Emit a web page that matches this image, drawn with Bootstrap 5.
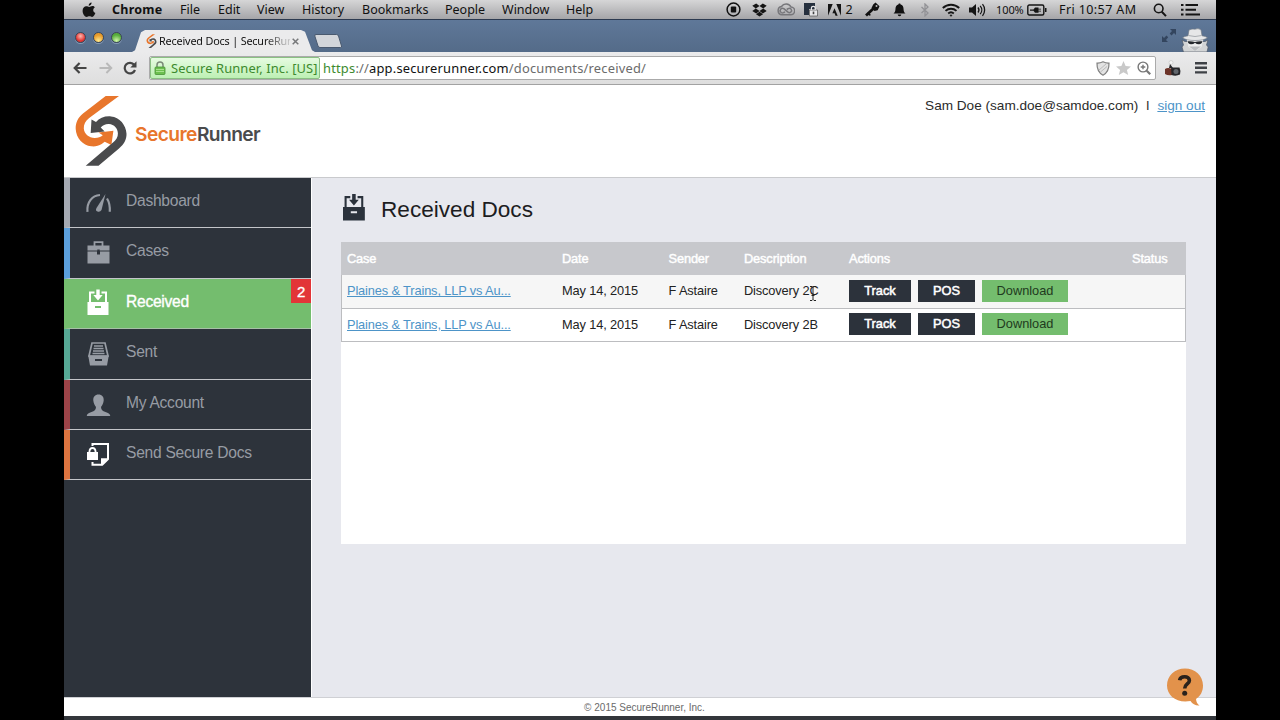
<!doctype html>
<html lang="en">
  <head>
    <meta charset="utf-8">
    <meta name="viewport" content="width=device-width, initial-scale=1">
    <title>Received Docs | SecureRunner</title>
    <!-- Bootstrap CSS CDN -->
    <link href="https://cdn.jsdelivr.net/npm/bootstrap@5.3.0/dist/css/bootstrap.min.css" rel="stylesheet">
    <style>
      body { background: #000; font-family: "Liberation Sans", Arial, sans-serif; overflow: hidden; }
      svg { display: block; flex: none; }
      .desktop { width: 1152px; height: 720px; }

      /* Menu bar */
      .mac-bar { height: 20px; padding-left: 18px; background: linear-gradient(#d6d6d7, #a5a5a8); border-bottom: 1px solid #2c3a50; font: 12.5px/18px "Noto Sans", sans-serif; color: #111; }
      .mac-menu span { flex: none; white-space: nowrap; }
      .slot { width: 26.5px; display: flex; justify-content: center; flex: none; }

      /* Browser window */
      .tab-strip { height: 32px; background: linear-gradient(#5f7899, #546b89); padding-left: 11px; }
      .light { width: 11px; height: 11px; border-radius: 50%; margin-right: 7px; box-shadow: 0 1px 0 #8599b3; border: 1px solid #3b4656; }
      .light-r { background: radial-gradient(circle at 50% 35%, #ffb9b0, #e0322f 65%); }
      .light-y { background: radial-gradient(circle at 50% 85%, #ffe98c, #e79a2a 65%); }
      .light-g { background: radial-gradient(circle at 50% 85%, #d1f7a8, #56ac3b 65%); }
      .page-tab { width: 183px; height: 22px; background: #ebebec; clip-path: polygon(0 100%, 3px 92%, 9px 10%, 13px 0, 169px 0, 173px 8%, 180px 92%, 100% 100%); padding: 0 0 0 14px; font: 10.8px/22px "Noto Sans", sans-serif; color: #111; margin-left: 10px; }
      .tab-title { width: 131px; white-space: nowrap; letter-spacing: -.16px; margin-left: 2px; -webkit-mask-image: linear-gradient(90deg, #000 106px, rgba(0, 0, 0, .2) 128px); mask-image: linear-gradient(90deg, #000 106px, rgba(0, 0, 0, .2) 128px); }
      .tool-strip { height: 33px; background: linear-gradient(#ebebec, #dedede); border-bottom: 1px solid #a2a2a2; padding: 0 9px 0 9px; }
      .url-box { width: 1007px; height: 24px; margin-left: 9px; background: #fff; border: 1px solid #aaa; border-radius: 2px; font: 12.9px/22px "Noto Sans", sans-serif; color: #6b6b6b; }
      .cert { width: 170px; height: 22px; background: linear-gradient(#e6fbe1, #bdf0b4); border: 1px solid #8ac083; border-radius: 2px; color: #3d8a2e; line-height: 20px; padding-left: 3px; white-space: nowrap; letter-spacing: .12px; }
      .url-text { margin-left: 3px; white-space: nowrap; letter-spacing: .2px; }

      /* Site */
      .site-head { height: 93px; background: #fff; border-bottom: 1px solid #c9cacd; padding: 10px 11px 0 11px; }
      .wordmark { font: 600 19.2px/24px Inter, sans-serif; color: #4a4b4d; letter-spacing: -.57px; }
      .wordmark b { font-weight: 600; color: #e8762c; }
      .user-line { font-size: 13.6px; line-height: 22px; color: #2b2b2b; }
      a, .user-line a { color: #4d94c8; }
      .site-main { height: 519px; background: #e7e8ee; }
      .side-nav { width: 248px; background: #2d333b; border-right: 1px solid #fff; }
      .side-nav .nav-link { height: 50.4px; padding: 0 0 0 15px; border-left: 6px solid; border-bottom: 1px solid #c3c5c9; color: #979ca4; font-size: 15.6px; letter-spacing: -.27px; line-height: 46px; }
      .side-nav .nav-link svg { margin: -1px 14px 0 0; }
      .side-nav .nav-link.active { background: #74bd6e; color: #fff; -webkit-text-stroke: .35px #fff; border-bottom-color: #a7bfa7; }
      .counter { right: 0; top: 0; width: 20px; height: 24px; background: #e23538; color: #fff; font-size: 15px; line-height: 25px; text-align: center; }
      .site-body { padding: 15px 30px 0 29px; }
      .page-title { font-size: 22.6px; line-height: 34px; color: #1d1d1f; margin: 0; }
      .doc-panel { height: 302px; margin-top: 15px; background: #fff; }
      .doc-table { table-layout: fixed; width: 845px; font-size: 12.8px; letter-spacing: -.13px; line-height: 20px; color: #222; --bs-table-color: #222; }
      .doc-table th, .doc-table td { padding: 0 6px; vertical-align: middle; white-space: nowrap; height: 33px; border-bottom: 1px solid #bcbdc0; }
      .doc-table th { background: #c7c8cc !important; color: #fff !important; font-weight: 400; -webkit-text-stroke: .45px #fff; border: 0; }
      .doc-table tbody tr:first-child td { background: #f6f6f6; }
      .doc-table td:last-child { box-shadow: inset -1px 0 #bcbdc0; }
      .doc-table td:first-child { box-shadow: inset 1px 0 #bcbdc0; }
      .doc-table .btn { border: 0; border-radius: 0; height: 21.500px; padding: 0; font-size: 12.8px; line-height: 22px; }
      .action-row { gap: 7px; margin-top: -1px; letter-spacing: -.1px; }
      .btn-ink { background: #2c323b; color: #fff; -webkit-text-stroke: .5px #fff; }
      .btn-leaf { background: #74bd6e; color: #1f3a20; }
      .w-track { width: 62px; } .w-pos { width: 57px; } .w-down { width: 86px; }
      .text-cursor { left: 71px; top: 9px; }
      .site-foot { height: 19px; background: #fff; border-top: 1px solid #cfd0d4; font-size: 10px; line-height: 19px; color: #6a6a6a; padding-left: 9px; }
      .window-edge { height: 4px; background: #33363b; }
      .help-bubble { left: 1102px; top: 667px; }
    </style>
  </head>
  <body>
    <div class="desktop mx-auto position-relative d-flex flex-column">
      <!-- Menu bar -->
      <div class="mac-bar d-flex align-items-center justify-content-between">
        <div class="mac-menu d-flex align-items-center">
          <svg width="14" height="16" viewBox="0 0 14 16" style="margin-right:16px"><path fill="#151515" d="M9.600 0.500c.1 1.500-1.200 3.200-2.900 3.200C6.500 2.200 8 .6 9.600.5zM12.800 5.500c-2.300 1.400-1.900 4.500.6 5.500-.6 1.700-1.800 3.900-3.300 3.900-1 0-1.500-.6-2.700-.6s-1.700.6-2.600.6C2.600 14.900.6 11.700.6 8.700c0-2.900 1.800-4.500 3.700-4.500 1.200 0 2.100.7 2.900.7s1.900-.8 3.300-.8c.9 0 1.800.5 2.300 1.400z"/></svg>
          <span style="width:68px;letter-spacing:.25px"><b>Chrome</b></span>
          <span style="width:38px">File</span>
          <span style="width:39px">Edit</span>
          <span style="width:45px">View</span>
          <span style="width:60px">History</span>
          <span style="width:83px">Bookmarks</span>
          <span style="width:57px">People</span>
          <span style="width:64px">Window</span>
          <span>Help</span>
        </div>
        <div class="d-flex align-items-center" style="width:496px">
          <div class="slot"><svg width="15" height="15" viewBox="0 0 15 15"><circle cx="7.500" cy="7.500" r="6.400" fill="none" stroke="#111" stroke-width="1.500"/><rect x="4.800" y="4.500" width="5.400" height="6" rx="1" fill="#111"/></svg></div>
          <div class="slot"><svg width="15" height="14" viewBox="0 0 15 14"><path fill="#151515" d="M4.200.4 7.500 3 3.800 5.400.3 2.800zM10.800.4l3.900 2.400-3.500 2.600L7.500 3zM.3 8l3.500-2.600L7.500 8l-3.300 2.400zM14.700 8l-3.500-2.600L7.500 8l3.300 2.400zM4 11.200l3.500-2.500 3.500 2.500-3.500 2.400z"/></svg></div>
          <div class="slot"><svg width="18" height="13" viewBox="0 0 18 13" fill="none" stroke="#77777b" stroke-width="1.500"><path d="M5 11.800a4.200 4.200 0 0 1-.5-8.300A5.500 5.500 0 0 1 14 4a3.900 3.900 0 0 1-.5 7.800z"/><path d="M8 8.800 6.800 9.500a2.300 2.300 0 1 1 0-3.800l4.200 3.500a2.200 2.200 0 1 0 .2-3.600L9.800 6.500"/></svg></div>
          <div class="slot" style="width:23px"><svg width="14" height="14" viewBox="0 0 14 14"><path fill="#26303e" d="M0 0h11v6H5v6H0z"/><path fill="#e7e7e9" stroke="#555" stroke-width=".7" d="M5.500 7h8v6h-8z"/><path fill="none" stroke="#e7e7e9" stroke-width="1.200" d="M7.400 7V5.300a1.900 1.900 0 0 1 3.800 0V7"/><path fill="#444" d="M8.700 8.600h1.600v2.600H8.700z"/></svg></div>
          <div class="slot" style="width:23px"><svg width="13" height="12" viewBox="0 0 13 12"><path fill="#151515" d="M0 0h4.700L0 11.700zM8.300 0H13v11.700zM6.500 4.300l3.200 7.400H7.500l-.9-2.400H4.400z"/></svg></div>
          <span style="width:14px">2</span>
          <div class="slot"><svg width="15" height="15" viewBox="0 0 15 15"><path fill="none" stroke="#111" stroke-width="2.800" d="M1 13.500 9 6"/><path fill="#111" d="M8.200 2.500 10.500.5l4 3.800-1.800 3.900-3.200.8-3-3zM3 10l3 3-1.500.8L2 12z"/><circle cx="11.500" cy="3.900" r="1" fill="#bbb"/></svg></div>
          <div class="slot"><svg width="13" height="14" viewBox="0 0 13 14"><path fill="#111" d="M6.500.4c.8 0 1.100.5 1.100 1 2 .5 2.900 2 2.900 4.100 0 2.800.8 4 2 5H.5c1.200-1 2-2.200 2-5 0-2.100.9-3.600 2.900-4.100 0-.5.3-1 1.100-1zM4.700 11.400h3.600a1.800 1.800 0 0 1-3.600 0z"/></svg></div>
          <div class="slot" style="width:24px"><svg width="10" height="14" viewBox="0 0 10 14" fill="none" stroke="#929296" stroke-width="1.300"><path d="m1.500 4 6.500 6-3 3V1l3 3-6.500 6"/></svg></div>
          <div class="slot" style="width:28px"><svg width="18" height="14" viewBox="0 0 18 14" fill="none" stroke="#151515" stroke-width="1.900"><path d="M.8 5a11.800 11.800 0 0 1 16.400 0M3.500 7.900a8 8 0 0 1 11 0M6.200 10.500a4.200 4.200 0 0 1 5.600 0"/><circle cx="9" cy="12.500" r=".7" fill="#151515" stroke-width=".8"/></svg></div>
          <div class="slot"><svg width="17" height="14" viewBox="0 0 17 14"><path fill="#151515" d="M0 4.500h3L7 1v12L3 9.500H0z"/><path fill="none" stroke="#151515" stroke-width="1.300" d="M9 4.500a4 4 0 0 1 0 5M11.200 2.800a6.500 6.500 0 0 1 0 8.400M13.500 1.200a9 9 0 0 1 0 11.600"/></svg></div>
          <span style="flex:none;width:36px;font-size:11px;padding-left:5px;letter-spacing:-.1px">100%</span>
          <svg width="20" height="12" viewBox="0 0 20 12"><rect x=".8" y="1" width="16" height="10" rx="1.500" fill="none" stroke="#151515" stroke-width="1.400"/><path fill="#151515" d="M18 4h1.500v4H18zM3 5.400h3.500L8 3.500h3.500v1.200H14v.8h-2.500v1.300H14v.8h-2.500v1.100H8L6.500 6.800H3z"/></svg>
          <span style="flex:none;padding-left:12px;width:106px;white-space:nowrap;letter-spacing:.4px">Fri 10:57 AM</span>
          <svg width="14" height="14" viewBox="0 0 14 14" fill="none" stroke="#151515"><circle cx="5.700" cy="5.500" r="4.300" stroke-width="1.600"/><path stroke-width="2" d="m8.800 8.800 4.200 4.300"/></svg>
          <svg width="19" height="12" viewBox="0 0 19 12" style="margin-left:14px"><path fill="#151515" d="M0 0h2.500v2H0zM4.500 0H17v2H4.500zM0 4.700h2.500v2H0zM4.500 4.700H15v2H4.500zM0 9.500h2.500v2H0zM4.500 9.500H19v2H4.500z"/></svg>
        </div>
      </div>

      <!-- Tabs -->
      <div class="tab-strip d-flex align-items-end">
        <div class="d-flex pb-1 mb-1">
          <div class="light light-r" style="margin-bottom:1px"></div>
          <div class="light light-y"></div>
          <div class="light light-g me-0"></div>
        </div>
        <div class="page-tab d-flex align-items-center">
          <svg width="11" height="14" viewBox="0 0 52 71"><use href="#runner-mark"/></svg>
          <div class="tab-title">Received Docs | SecureRun</div>
          <svg width="7" height="7" viewBox="0 0 7 7" stroke="#77787a" stroke-width="1.500" style="margin-left:2px"><path d="m.7.7 5.600 5.600M6.300.7.700 6.300"/></svg>
        </div>
        <svg width="28" height="14" viewBox="0 0 28 14" style="margin:0 0 4px -1px"><path fill="#d2d5da" stroke="#49596f" d="M2 .5h20.500q1.500 0 2 1.500l3 10q.4 1.500-1 1.500H6q-1.500 0-2-1.500L.8 2Q.5.5 2 .5z"/></svg>
        <svg width="14" height="13" viewBox="0 0 14 13" class="ms-auto" style="margin-bottom:10px"><path fill="#33455e" d="M8 0h6v6l-2-2-2.500 2.500L7.700 4.600 10 2zM0 7l2 2 2.500-2.500 1.700 1.800L4 11l2 2H0z"/></svg>
        <svg width="28" height="24" viewBox="0 0 28 24" style="margin:0 7px 0 5px"><path fill="#d3d5d6" stroke="#4d5866" stroke-width=".7" d="M4 13.500 1 12l1.500 5L1 19l1.500 5h23.500l1.200-5-1.700-2 1.500-5-3 1.500z"/><path fill="#eceded" d="M5.500 11h17l-2 8-6.500 4-6.500-4z"/><path fill="#b9bcbf" d="M8 18.500h12L14 23z"/><path fill="#e6e7e8" stroke="#6d757f" stroke-width=".6" d="M8 2q3-1.500 6-.8Q17-.2 20 1.800l1 6q4 .6 5.500 2-4 2.700-12.500 2.700T1.500 9.800Q3 8.400 7 7.800z"/><path fill="none" stroke="#a9adb1" d="M7.300 7.500q6.700 2 13.400 0"/><path fill="#23272c" d="M6.500 13.300q4-.5 7.500.8 3.500-1.300 7.500-.8-.8 3-3.500 3-2.500 0-4-1.500-1.500 1.500-4 1.500-2.700 0-3.500-3z"/></svg>
      </div>

      <!-- Toolbar -->
      <div class="tool-strip d-flex align-items-center">
        <svg width="14" height="12" viewBox="0 0 14 12" fill="none" stroke="#454545" stroke-width="2.200"><path d="M13.500 6H2M6.600 1 1.700 6l4.900 5"/></svg>
        <svg width="14" height="12" viewBox="0 0 14 12" fill="none" stroke="#b9b9b9" stroke-width="1.900" style="margin-left:12px"><path d="M.5 6H12M7.400 1l4.900 5-4.900 5"/></svg>
        <svg width="14" height="14" viewBox="0 0 14 14" style="margin-left:10px"><path fill="none" stroke="#454545" stroke-width="2.200" d="M11.200 3.800A5.300 5.300 0 1 0 12 9"/><path fill="#454545" d="M13.500.3v6.200H7.300z"/></svg>
        <div class="url-box d-flex align-items-center ms-auto">
          <div class="cert d-flex align-items-center">
            <svg width="12" height="14" viewBox="0 0 12 14"><path fill="none" stroke="#7a8a78" stroke-width="1.500" d="M3 7V4a3 3 0 0 1 6 0v3"/><rect x="1" y="6" width="10" height="7.500" rx="1" fill="#6cc04f" stroke="#469336" stroke-width=".8"/><path stroke="#a7e28f" d="M2 8.500h8M2 10.500h8"/></svg>
            <span style="margin-left:5px">Secure Runner, Inc. [US]</span>
          </div>
          <div class="url-text"><span style="color:#3d8a2e">https</span>://<span style="color:#111">app.securerunner.com</span>/documents/received/</div>
          <div class="d-flex align-items-center ms-auto" style="gap:6px;padding-right:4px">
            <svg width="14" height="15" viewBox="0 0 14 15"><path fill="#e3e3e3" stroke="#808080" stroke-width="1.200" d="M7 .8q3 1.500 6 1.300Q13.300 11 7 14.200.7 11 1 2.100 4 2.300 7 .8z"/><path stroke="#bbb" d="m3 9 7-6M4.500 11 11 5.500"/></svg>
            <svg width="15" height="14" viewBox="0 0 15 14"><path fill="#c9c9c9" d="m7.500 0 2.100 4.900 5.400.5-4.100 3.500L12.200 14l-4.700-2.800L2.800 14l1.300-5.100L0 5.400l5.400-.5z"/></svg>
            <svg width="14" height="14" viewBox="0 0 14 14" fill="none" stroke="#777" stroke-width="1.400"><circle cx="6" cy="6" r="4.900"/><path d="M3.700 6h4.600M6 3.700v4.600"/><path stroke-width="2.200" d="m9.700 9.700 3.500 3.500"/></svg>
          </div>
        </div>
        <svg width="17" height="17" viewBox="0 0 17 17" style="margin-left:8px"><circle cx="7" cy="2.500" r="2" fill="#f4f4f4" stroke="#bbb" stroke-width=".5"/><path fill="#26262a" d="m6 4 3 4H5z"/><path fill="#6d3429" d="M1 9q3-2 7 0v6q-4 1-7-1z"/><path fill="#26262a" d="M7 7.500h8.500q1.500 3 .5 7-4 2-8.500.5z"/><circle cx="12" cy="11.500" r="2.500" fill="#61666c"/></svg>
        <svg width="12" height="12" viewBox="0 0 12 12" style="margin-left:14px"><path fill="#3e4146" d="M0 0h12v2.400H0zM0 4.600h12V7H0zM0 9.200h12v2.400H0z"/></svg>
      </div>

      <!-- Site header -->
      <header class="site-head d-flex justify-content-between">
        <div class="d-flex">
          <svg width="53" height="72" viewBox="0 0 53 72">
            <g id="runner-mark">
              <path fill="#e8762c" d="M44 1H30.700L8 18.500C2.500 23 .5 28 .7 34c.5 9 7 16.500 15.500 17.300 4 .4 7.500-.5 10.500-2.300l3-2.300 6.700 3.300 2-14.300L23.500 37.500l4.300 2.700c-2.300 1.800-4.500 2.700-8 2.700-6 0-10.600-4.200-11-9.400-.2-4 1.700-7.500 5.400-10.400z"/>
              <path fill="#4a4b4d" d="M10.700 70.700h12.800L44 53.500c5-4.300 7.700-9 7.500-14.700-.4-9-7-16.600-15.500-17.400-6-.5-11.500 1.300-15 5.600L16.500 24.500 15.700 38l14-1.500-4-4c2.300-2.500 4.800-3.800 8.300-3.600 5.200.3 8.700 4.300 8.900 9.300.2 4-1.800 6.800-5.200 9.600z"/>
            </g>
          </svg>
          <div class="wordmark" style="margin:27px 0 0 7px"><b>Secure</b>Runner</div>
        </div>
        <div class="user-line">Sam Doe (sam.doe@samdoe.com)<span style="margin:0 8px">l</span><a href="#">sign out</a></div>
      </header>

      <!-- Main area -->
      <main class="site-main d-flex">
        <nav class="side-nav nav flex-column flex-nowrap">
          <a class="nav-link d-flex" href="#" style="border-left-color:#a5a9b2">
            <svg width="27" height="46" viewBox="0 -13 27 46"><path fill="none" stroke="#979ca4" stroke-width="2.200" d="M2.500 21.800C1.500 12.500 7 5.500 15 5M22 8.500q3.200 5 2.800 13.300"/><path fill="#979ca4" d="m20.500 4-4 16q-1.500 2.500-4 1.500t-1-3.600z"/></svg>
            Dashboard
          </a>
          <a class="nav-link d-flex" href="#" style="border-left-color:#5b9fdc">
            <svg width="27" height="46" viewBox="0 -12 27 46"><path fill="none" stroke="#979ca4" stroke-width="1.800" d="M9.500 7V3.200h8V7"/><path fill="#979ca4" d="M2.500 6.500h22v5h-22zM2.500 12.500H12v3h3v-3h9.500v12h-22z"/><path fill="#2d333b" d="M12.300 10.500h2.400v4.300h-2.400z"/></svg>
            Cases
          </a>
          <a class="nav-link active d-flex position-relative" href="#" style="border-left-color:#74bd6e">
            <svg width="27" height="46" viewBox="0 -11 27 46"><g id="inbox-icon" fill="currentColor" stroke="none"><path d="M4 2.500h5.500v2H6v9H4zM22 2.500h-5.500v2H20v9h2zM11.300 .5h3.400v5.500h3L13 11.500 8.300 6h3z"/><path fill-rule="evenodd" d="M2.500 13h21v13h-21zM10 17v2h6v-2z"/></g></svg>
            Received
            <span class="counter position-absolute">2</span>
          </a>
          <a class="nav-link d-flex" href="#" style="border-left-color:#56a895">
            <svg width="27" height="46" viewBox="0 -12 27 46"><path fill="none" stroke="#979ca4" stroke-width="1.700" d="M7 3h13l3 13H4z"/><path stroke="#979ca4" stroke-width="1.500" d="M9 6h9M8.500 8.500h10M8 11h11M7.500 13.500h12"/><path fill="#979ca4" fill-rule="evenodd" d="M3.200 15.500h20.600L22 25.500H5zM10 19v2h7v-2z"/></svg>
            Sent
          </a>
          <a class="nav-link d-flex" href="#" style="border-left-color:#9c4348">
            <svg width="27" height="46" viewBox="0 -12 27 46"><path fill="#979ca4" d="M13.500 3.500c3.500 0 5.500 2.500 5.200 6-.3 3-1.500 5-2.700 6.500.2 3 1.500 4 4.500 5 2.700.9 4.500 1.500 4.800 4H1.700c.3-2.500 2.100-3.100 4.800-4 3-1 4.300-2 4.500-5-1.200-1.500-2.400-3.500-2.700-6.500-.3-3.500 1.700-6 5.200-6z"/></svg>
            My Account
          </a>
          <a class="nav-link d-flex" href="#" style="border-left-color:#dd7440">
            <svg width="27" height="46" viewBox="0 -12 27 46"><path fill="none" stroke="#fff" stroke-width="2" d="M7.500 5V3h15.500v15.200l-5.800 5.600H7.500V21"/><path fill="#fff" d="M16 24.500v-7.200h7.200z"/><path fill="#fff" fill-rule="evenodd" d="M2 11h1.500Q3.700 6 7.500 6t4 5H13v8H2zM5.300 11h4.400q-.2-3-2.200-3t-2.200 3z"/></svg>
            Send Secure Docs
          </a>
        </nav>

        <section class="site-body flex-grow-1">
          <div class="d-flex align-items-center">
            <svg width="27" height="29" viewBox="0 0 27 29" style="color:#2b323c;margin:-5px 13px 0 0"><use href="#inbox-icon" transform="translate(-.6 .5) scale(1.040)"/></svg>
            <h1 class="page-title">Received Docs</h1>
          </div>
          <div class="doc-panel">
            <table class="table doc-table mb-0">
              <colgroup><col style="width:215px"><col style="width:106.500px"><col style="width:75.500px"><col style="width:105px"><col style="width:283px"><col></colgroup>
              <thead>
                <tr><th>Case</th><th>Date</th><th>Sender</th><th>Description</th><th>Actions</th><th>Status</th></tr>
              </thead>
              <tbody>
                <tr>
                  <td><a href="#">Plaines &amp; Trains, LLP vs Au...</a></td>
                  <td>May 14, 2015</td>
                  <td>F Astaire</td>
                  <td class="position-relative">Discovery 2C
                    <svg class="text-cursor position-absolute" width="8" height="18" viewBox="0 0 8 18" fill="none" stroke="#222"><path d="M1 2.500h2l1 1 1-1h2M4 3.500v12M1 16.500h2l1-1 1 1h2M2.500 11.500h3"/></svg>
                  </td>
                  <td><div class="action-row d-flex align-items-center"><button class="btn btn-ink w-track">Track</button><button class="btn btn-ink w-pos">POS</button><button class="btn btn-leaf w-down">Download</button></div></td>
                  <td></td>
                </tr>
                <tr>
                  <td><a href="#">Plaines &amp; Trains, LLP vs Au...</a></td>
                  <td>May 14, 2015</td>
                  <td>F Astaire</td>
                  <td>Discovery 2B</td>
                  <td><div class="action-row d-flex align-items-center"><button class="btn btn-ink w-track">Track</button><button class="btn btn-ink w-pos">POS</button><button class="btn btn-leaf w-down">Download</button></div></td>
                  <td></td>
                </tr>
              </tbody>
            </table>
          </div>
        </section>
      </main>

      <footer class="site-foot text-center">© 2015 SecureRunner, Inc.</footer>
      <div class="window-edge"></div>

      <!-- Help bubble -->
      <svg class="help-bubble position-absolute" width="38" height="40" viewBox="0 0 38 40">
        <path fill="#e2924b" d="M19 1.500c10 0 18 7.300 18 17 0 6-2.600 10.500-7 13.500.3 3 1.200 5 3.500 6.500-4 .3-7-1.500-9-4.500C11 36.500 1 29 1 18.500c0-9.700 8-17 18-17z"/>
        <path fill="none" stroke="#2a221c" stroke-width="3.600" d="M13.600 13.200c.8-4.600 9.800-4.600 9.800.2 0 3.600-4.700 3.600-4.700 8.100"/>
        <circle cx="18.700" cy="26.300" r="2.500" fill="#2a221c"/>
      </svg>
    </div>
    <!-- Bootstrap JS Bundle -->
    <script src="https://cdn.jsdelivr.net/npm/bootstrap@5.3.0/dist/js/bootstrap.bundle.min.js"></script>
  </body>
</html>
